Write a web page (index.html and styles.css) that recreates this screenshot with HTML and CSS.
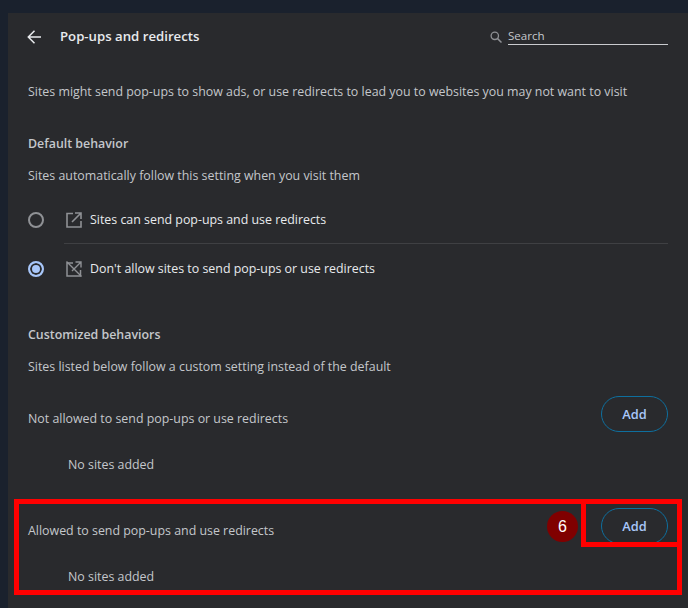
FILE: index.html
```html
<!DOCTYPE html>
<html lang="en">
<head>
<meta charset="utf-8">
<title>Pop-ups and redirects</title>
<link rel="stylesheet" href="styles.css">
</head>
<body>
<main class="panel">
  <header class="head">
    <svg class="back" viewBox="0 0 16 16" width="16" height="16"><path d="M15 8H2.500M8.500 1.800L2.300 8l6.200 6.200" fill="none" stroke="#e8eaed" stroke-width="1.5"/></svg>
    <h1 class="title">Pop-ups and redirects</h1>
    <div class="search">
      <svg class="search-icon" viewBox="0 0 12 12" width="12" height="12"><circle cx="4.800" cy="4.800" r="3.700" fill="none" stroke="#8f9195" stroke-width="1.300"/><path d="M7.600 7.600L11.500 11.500" stroke="#8f9195" stroke-width="1.500"/></svg>
      <span class="search-field">Search</span>
    </div>
  </header>
  <p class="intro">Sites might send pop-ups to show ads, or use redirects to lead you to websites you may not want to visit</p>
  <h2 class="section first">Default behavior</h2>
  <p class="desc">Sites automatically follow this setting when you visit them</p>
  <div class="option">
    <span class="radio"></span>
    <svg class="opt-icon" viewBox="0 0 16 16" width="16" height="16"><path d="M7 1.500H1v13.500h14V9" fill="none" stroke="#8f9195" stroke-width="1.600"/><path d="M6 10L14.500 1.500M9 1h6v6" fill="none" stroke="#8f9195" stroke-width="1.600"/></svg>
    <span class="opt-label">Sites can send pop-ups and use redirects</span>
  </div>
  <div class="option ruled">
    <span class="radio on"></span>
    <svg class="opt-icon" viewBox="0 0 16 16" width="16" height="16"><path d="M7 2H1v13h13.500V9" fill="none" stroke="#8f9195" stroke-width="1.500"/><path d="M6 10L14.500 1.500M9.500 1H15v5.500M0.500 0.500L15.500 15.500" fill="none" stroke="#8f9195" stroke-width="1.400"/></svg>
    <span class="opt-label">Don't allow sites to send pop-ups or use redirects</span>
  </div>
  <h2 class="section custom">Customized behaviors</h2>
  <p class="desc">Sites listed below follow a custom setting instead of the default</p>
  <section class="list">
    <div class="list-head"><span class="list-name">Not allowed to send pop-ups or use redirects</span><button class="add" type="button">Add</button></div>
    <p class="empty">No sites added</p>
  </section>
  <section class="list second">
    <div class="list-head"><span class="list-name">Allowed to send pop-ups and use redirects</span><button class="add" type="button">Add</button></div>
    <p class="empty">No sites added</p>
  </section>
</main>
<div class="mark mark-row"></div>
<div class="mark mark-btn"></div>
<div class="step">6</div>
</body>
</html>
```
FILE: styles.css
```css
* { box-sizing: border-box; }
html, body { margin: 0; height: 100%; }
body {
  position: relative;
  height: 608px;
  overflow: hidden;
  background: #1a212d;
  padding: 13px 0 0 8px;
  font-family: "Open Sans", "Noto Sans", sans-serif;
  font-size: 12.4px;
  color: #c4c7cb;
}
.panel { height: 595px; background: #292a2d; padding: 0 20px; }
.head { display: flex; align-items: center; height: 46px; }
.back { margin: 2px 18px 0 -2px; }
.title { margin: 0; font-size: 13.2px; font-weight: 600; color: #e8eaed; flex: 1; }
.search { display: flex; align-items: center; gap: 6px; }
.search-icon { margin-top: 1px; }
.search-field {
  width: 160px;
  height: 18px;
  line-height: 18px;
  font-size: 11.6px;
  color: #c4c7cb;
  border-bottom: 1px solid #c9cbce;
}
.intro { margin: 24px 0 0; line-height: 18px; }
.section { margin: 0; font-size: 12.4px; font-weight: 600; line-height: 18px; color: #c4c7cb; }
.section.first { margin-top: 34px; }
.section.custom { margin-top: 33px; }
.desc { margin: 14px 0 0; line-height: 18px; }
.option { display: flex; align-items: center; height: 49px; color: #e8eaed; }
.option:first-of-type { margin-top: 10px; }
.ruled { position: relative; }
.ruled::before { content: ""; position: absolute; left: 36px; right: 0; top: -1px; height: 1px; background: #3f4043; }
.radio { width: 16px; height: 16px; border: 2px solid #8f9195; border-radius: 50%; margin-right: 22px; flex: none; }
.radio.on { border-color: #a8c7fa; background: #a8c7fa; box-shadow: inset 0 0 0 2px #292a2d; }
.opt-icon { margin-right: 8px; flex: none; }
.list { margin-top: 20px; }
.list.second { margin-top: 34px; }
.list-head { display: flex; align-items: center; justify-content: space-between; height: 36px; }
.list-name { padding-top: 8px; }
.add {
  width: 67px;
  height: 36px;
  border: 1px solid #0e6f9e;
  border-radius: 18px;
  background: transparent;
  color: #a8c7fa;
  font: 600 12.8px "Open Sans", "Noto Sans", sans-serif;
}
.empty { margin: 24px 0 0 40px; line-height: 18px; }
.mark { position: absolute; border: 5px solid #f00; }
.mark-row { left: 14px; top: 499px; width: 668px; height: 96px; }
.mark-btn { left: 581px; top: 499px; width: 101px; height: 48px; }
.step {
  position: absolute;
  left: 547px;
  top: 511px;
  width: 31px;
  height: 31px;
  border-radius: 50%;
  background: #800000;
  color: #fff;
  font: 16px/31px "Liberation Sans", sans-serif;
  text-align: center;
}
```
